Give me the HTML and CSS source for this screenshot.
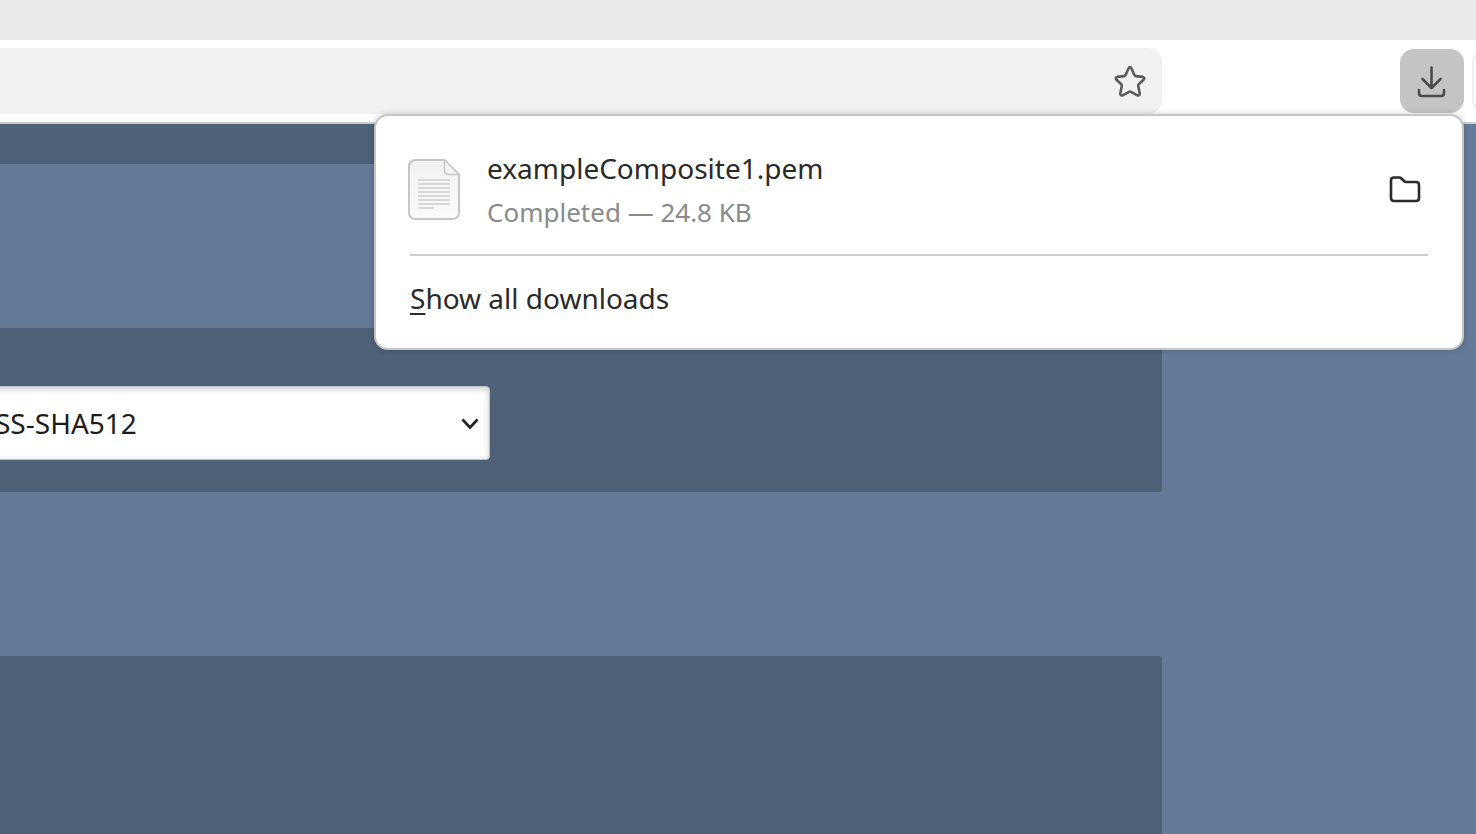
FILE: index.html
```html
<!DOCTYPE html>
<html lang="en">
<head>
    <meta charset="UTF-8">
    <meta name="viewport" content="width=device-width, initial-scale=1.0">
    <title>Downloads</title>
    <link rel="stylesheet" href="styles.css">
</head>
<body>
    <header class="browser">
        <div class="tab-strip"></div>
        <div class="toolbar">
            <div class="url-bar">
                <button class="icon-button" type="button" aria-label="Bookmark this page">
                    <svg width="34" height="34" viewBox="0 0 34 34">
                        <path d="M15.5 3.4Q17 .9 18.500 3.400L21.500 10.200Q21.900 11 22.800 11.100L29.600 11.900Q32.500 12.500 30.500 14.800L25.700 19.300Q25 20 25.200 20.900L26.700 28.200Q26.900 31.300 24 30.200L17.900 26.800Q17 26.300 16.100 26.800L10 30.200Q7.100 31.300 7.300 28.200L8.800 20.900Q9 20 8.300 19.300L3.500 14.800Q1.500 12.500 4.400 11.900L11.200 11.100Q12.100 11 12.500 10.200Z" fill="none" stroke="#5b5b5b" stroke-width="2.600" stroke-linejoin="round"/>
                    </svg>
                </button>
            </div>
            <button class="download-button" type="button" aria-label="Downloads">
                <svg width="32" height="34" viewBox="0 0 32 34">
                    <path d="M15.500 3.500V23M6.500 15L15.500 24L24.500 15M3 26V29Q3 32 6 32H25Q28 32 28 29V26" fill="none" stroke="#4b4b4b" stroke-width="2.600" stroke-linecap="round" stroke-linejoin="round"/>
                </svg>
            </button>
            <div class="toolbar-next"></div>
        </div>
    </header>

    <main class="page">
        <section class="band band-top"></section>
        <section class="band band-form">
            <div class="field">
                <select class="algorithm" aria-label="Signature algorithm">
                    <option>SS-SHA512</option>
                </select>
                <svg class="chevron" width="20" height="14" viewBox="0 0 20 14">
                    <path d="M2.500 3.500L10 11.500L17.500 3.500" fill="none" stroke="#222" stroke-width="2.600"/>
                </svg>
            </div>
        </section>
        <section class="band band-bottom"></section>
    </main>

    <div class="downloads-panel">
        <div class="download-item">
            <svg class="file-icon" width="54" height="64" viewBox="0 0 54 64">
                <defs>
                    <linearGradient id="paper" x1="0" y1="0" x2="0" y2="1">
                        <stop offset="0" stop-color="#f1f1f1"/>
                        <stop offset="1" stop-color="#fbfbfb"/>
                    </linearGradient>
                </defs>
                <path d="M9 2H37.500L52 16.500V54Q52 61 45 61H9Q2 61 2 54V9Q2 2 9 2Z" fill="url(#paper)" stroke="#c6c6c6" stroke-width="2"/>
                <path d="M37.500 2V12.500Q37.500 16.500 41.500 16.500H52Z" fill="#f6f6f4" stroke="#c6c6c6" stroke-width="1.500" stroke-linejoin="round"/>
                <path d="M11 22H43M11 26H43M11 30H43M11 34H43M11 38H43M11 42H43M11 46H43M11 50H27" stroke="#d7d7d7" stroke-width="2"/>
            </svg>
            <div class="download-info">
                <p class="file-name">exampleComposite1.pem</p>
                <p class="file-status">Completed — 24.8 KB</p>
            </div>
            <button class="icon-button" type="button" aria-label="Show in folder">
                <svg width="34" height="30" viewBox="0 0 34 30">
                    <path d="M6 2.500H11Q12.500 2.500 13.500 3.500L16 6Q17 7 18.500 7H28Q31 7 31 10V23Q31 26 28 26H6Q3 26 3 23V5.500Q3 2.500 6 2.500Z" fill="none" stroke="#2b2b2b" stroke-width="2.600" stroke-linejoin="round"/>
                </svg>
            </button>
        </div>
        <button class="show-all" type="button"><span class="access-key">S</span>how all downloads</button>
    </div>
</body>
</html>
```
FILE: styles.css
```css
* {
    box-sizing: border-box;
}

body {
    margin: 0;
    min-height: 100vh;
    display: flex;
    flex-direction: column;
    overflow: hidden;
    font-family: "Noto Sans", sans-serif;
    color: #2a2a2a;
    background: #657a99;
}

button {
    font: inherit;
    color: inherit;
    border: 0;
    background: none;
    cursor: pointer;
}

svg {
    display: block;
}

.tab-strip {
    height: 40px;
    background: #eaeaea;
}

.toolbar {
    display: flex;
    align-items: center;
    height: 84px;
    background: #fff;
    border-bottom: 2px solid #cbcbcb;
}

.url-bar {
    flex: 1;
    display: flex;
    justify-content: flex-end;
    align-items: center;
    height: 66px;
    margin-right: 238px;
    padding: 2px 15px 0 0;
    background: #f1f1f1;
    border-radius: 0 14px 14px 0;
}

.icon-button {
    padding: 0;
}

.download-button {
    display: flex;
    align-items: center;
    justify-content: center;
    width: 64px;
    height: 64px;
    padding: 0;
    background: #c4c4c4;
    border-radius: 14px;
}

.toolbar-next {
    width: 32px;
    height: 64px;
    margin: 0 -28px 0 8px;
    border: 2px solid #eee;
    border-radius: 14px;
}

/* Page behind the panel */
.page {
    flex: 1;
    display: flex;
    flex-direction: column;
    gap: 164px;
    padding-right: 314px;
}

.band {
    background: #4f6177;
    border-radius: 0 3px 3px 0;
}

.band-top {
    height: 40px;
}

.band-form {
    padding: 58px 0 32px;
}

.band-bottom {
    flex: 1;
    border-bottom-right-radius: 0;
}

.field {
    display: flex;
    align-items: center;
    width: 490px;
}

.algorithm {
    flex: 1;
    height: 74px;
    margin-left: -12px;
    padding: 0 40px 0 6px;
    appearance: none;
    font-family: "Noto Sans", sans-serif;
    font-size: 28px;
    color: #1c1c1c;
    background: #fff;
    border: 1px solid #bbc0c7;
    border-radius: 4px;
    box-shadow: inset 0 2px 6px rgba(0, 0, 0, 0.2);
}

.chevron {
    margin-left: -30px;
    margin-right: 10px;
    pointer-events: none;
}

/* Downloads panel */
.downloads-panel {
    position: absolute;
    top: 114px;
    right: 12px;
    width: 1090px;
    padding: 30px 34px 20px;
    background: #fff;
    border: 2px solid #c6c6c6;
    border-radius: 14px;
    box-shadow: 0 0 6px rgba(0, 0, 0, 0.2);
}

.download-item {
    display: flex;
    align-items: center;
    padding: 0 6px 20px 0;
    border-bottom: 2px solid #cdcdcd;
}

.file-icon {
    margin-left: -3px;
}

.download-info {
    flex: 1;
    margin-left: 26px;
}

.file-name,
.file-status {
    margin: 0;
    line-height: 44px;
}

.file-name {
    font-size: 28px;
}

.file-status {
    font-size: 26px;
    color: #8a8a8a;
}

.show-all {
    display: block;
    padding: 20px 0 8px;
    font-size: 28px;
    line-height: 44px;
}

.access-key {
    text-decoration: underline;
    text-decoration-thickness: 2px;
    text-underline-offset: 4px;
}
```
